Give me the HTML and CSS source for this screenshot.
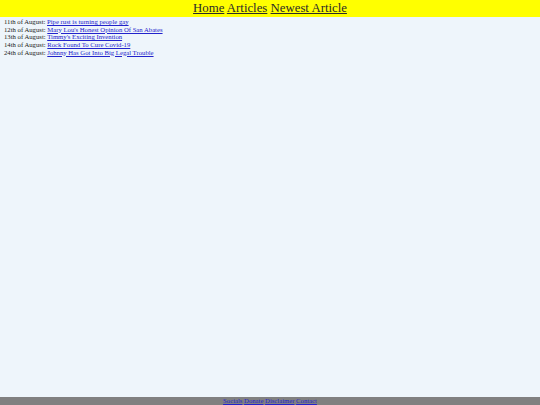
FILE: index.html
```html
<!DOCTYPE html>
<html>
<head>
<meta charset="utf-8">
<link rel="stylesheet" href="styles.css">
</head>
<body>
<div class="page">
  <header class="topbar">
    <a href="#">Home</a> <a href="#">Articles</a> <a href="#">Newest Article</a>
  </header>
  <main class="list">
    <div>11th of August: <a href="#">Pipe rust is turning people gay</a></div>
    <div>12th of August: <a href="#">Mary Lou's Honest Opinion Of San Abates</a></div>
    <div>13th of August: <a href="#">Timmy's Exciting Invention</a></div>
    <div>14th of August: <a href="#">Rock Found To Cure Covid-19</a></div>
    <div>24th of August: <a href="#">Johnny Has Got Into Big Legal Trouble</a></div>
  </main>
  <footer class="footer">
    <a href="#">Socials</a> <a href="#">Donate</a> <a href="#">Disclaimer</a> <a href="#">Contact</a>
  </footer>
</div>
</body>
</html>
```
FILE: styles.css
```css
html, body {
  margin: 0;
  padding: 0;
  height: 100%;
}
body {
  background: #eef5fb;
  font-family: "Liberation Serif", "Times New Roman", serif;
  color: #222;
}
.page {
  display: flex;
  flex-direction: column;
  min-height: 100%;
}
.topbar {
  background: #ffff00;
  text-align: center;
  font-size: 12.8px;
  line-height: 16.5px;
  height: 16.5px;
}
.topbar a {
  color: #2a2a2a;
}
.list {
  flex: 1;
  padding: 1.5px 4px 0;
  font-size: 6.7px;
  line-height: 7.65px;
}
.list a {
  color: #2222cc;
}
.footer {
  background: #808080;
  text-align: center;
  font-size: 6.7px;
  line-height: 8px;
  height: 8px;
}
.footer a {
  color: #2222cc;
}
```
